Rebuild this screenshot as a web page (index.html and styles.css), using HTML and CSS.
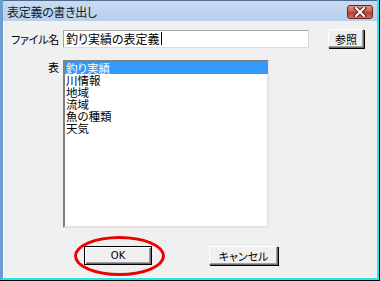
FILE: index.html
```html
<!doctype html>
<html>
<head>
    <meta charset="utf-8">
    <title>表定義の書き出し</title>
    <link rel="stylesheet" href="styles.css">
</head>
<body>
    <div class="frame">
        <div class="window">
            <div class="titlebar">
                <span class="title">表定義の書き出し</span>
                <span class="close">
                    <svg width="14" height="10" viewBox="0 0 14 10">
                        <path d="M3 1 L11 9 M11 1 L3 9" stroke="#5a1a14" stroke-width="4" stroke-linecap="square"/>
                        <path d="M3 1 L11 9 M11 1 L3 9" stroke="#fff" stroke-width="2" stroke-linecap="square"/>
                    </svg>
                </span>
            </div>

            <div class="client">
                <div class="row file-row">
                    <label class="caption">ファイル名</label>
                    <div class="textbox">釣り実績の表定義<span class="caret"></span></div>
                    <span class="btn browse">参照</span>
                </div>

                <div class="row table-row">
                    <label class="caption">表</label>
                    <ul class="listbox">
                        <li class="selected">釣り実績</li>
                        <li>川情報</li>
                        <li>地域</li>
                        <li>流域</li>
                        <li>魚の種類</li>
                        <li>天気</li>
                    </ul>
                </div>

                <div class="row actions">
                    <div class="ok-wrap">
                        <span class="btn ok">OK</span>
                        <span class="ring"></span>
                    </div>
                    <span class="btn cancel">キャンセル</span>
                </div>
            </div>
        </div>
    </div>
</body>
</html>
```

FILE: styles.css
```css
:root {
    --face: #f0f0f0;
    --ui-font: "Noto Sans CJK JP", "Liberation Sans", sans-serif;
}

html, body {
    margin: 0;
    height: 100%;
    overflow: hidden;
}
body {
    font-family: var(--ui-font);
    font-size: 11px;
    font-feature-settings: "palt";
    color: #000;
    background: #000;
}

.frame {
    width: 379px;
    height: 280px;
    border-right: 1px solid #000;
    border-bottom: 1px solid #000;
}
.window {
    box-sizing: border-box;
    height: 100%;
    display: flex;
    flex-direction: column;
    border-left: 3px solid #6f9bd3;
    box-shadow: inset 1px 0 0 #2d4f86;
    border-right: 2px solid #22e6f2;
    border-bottom: 2px solid #22e6f2;
    background: var(--face);
}

/* title bar */
.titlebar {
    height: 21px;
    display: flex;
    align-items: center;
    justify-content: space-between;
    padding: 0 4px 0 4px;
    background: linear-gradient(#c9dcf2, #b6cfec);
    border-top: 1px solid #51698c;
    box-sizing: border-box;
}
.title {
    font-size: 12px;
    color: #111a26;
    letter-spacing: -0.3px;
}
.close {
    width: 26px;
    height: 14px;
    display: flex;
    align-items: center;
    justify-content: center;
    border: 1px solid #6b231c;
    border-radius: 3px;
    background: linear-gradient(#e3988c, #c75244 50%, #b83a2c 51%, #d0705c);
    box-sizing: border-box;
    margin-top: 2px;
}

/* client area */
.client {
    flex: 1;
    padding: 8px 0 0 7px;
    border-left: 1px solid #fafafa;
    border-bottom: 1px solid #fafafa;
}
.row {
    display: flex;
}
.caption {
    width: 48px;
    margin-right: 4px;
    text-align: right;
    white-space: nowrap;
}

.file-row {
    align-items: center;
    height: 19px;
}
.file-row .caption {
    text-align: left;
    letter-spacing: -0.2px;
}
.textbox {
    width: 246px;
    height: 18px;
    box-sizing: border-box;
    display: flex;
    align-items: center;
    padding-left: 2px;
    background: #fff;
    border: 1px solid #a5a5a5;
    border-right-color: #dcdcdc;
    border-bottom-color: #dcdcdc;
    font-size: 12px;
    line-height: 1;
}
.caret {
    width: 1px;
    height: 13px;
    background: #000;
    margin-left: 1px;
}

.btn {
    box-sizing: border-box;
    height: 19px;
    display: flex;
    align-items: center;
    justify-content: center;
    background: var(--face);
    border: 1px solid;
    border-color: #fff #6b6b6b #6b6b6b #fff;
    box-shadow: 1px 1px 0 #000, inset -1px -1px 0 #a0a0a0;
}
.browse {
    width: 36px;
    margin-left: 19px;
}

.table-row {
    margin-top: 12px;
}
.table-row .caption {
    line-height: 14px;
}
.listbox {
    width: 206px;
    height: 168px;
    box-sizing: border-box;
    margin: 0;
    padding: 0;
    list-style: none;
    background: #fff;
    border: 2px solid;
    border-color: #808080 #e3e3e3 #e3e3e3 #808080;
}
.listbox li {
    height: 12px;
    line-height: 12px;
    padding-left: 1px;
    font-size: 11.5px;
}
.listbox li.selected {
    background: #3399ff;
    color: #fff;
    margin-right: -1px;
}

.actions {
    margin-top: 18px;
    padding-left: 73px;
}
.ok-wrap {
    position: relative;
}
.ok {
    width: 68px;
    border: 1px solid #000;
    box-shadow: inset 1px 1px 0 #fff, inset -1px -1px 0 #6b6b6b, inset -2px -2px 0 #a0a0a0;
    font-family: "DejaVu Sans", sans-serif;
    font-size: 10px;
}
.ring {
    position: absolute;
    left: -10px;
    top: -10px;
    width: 91px;
    height: 40px;
    box-sizing: border-box;
    border: 3px solid #ee0000;
    border-radius: 50%;
}
.cancel {
    width: 69px;
    margin-left: 57px;
}
```
